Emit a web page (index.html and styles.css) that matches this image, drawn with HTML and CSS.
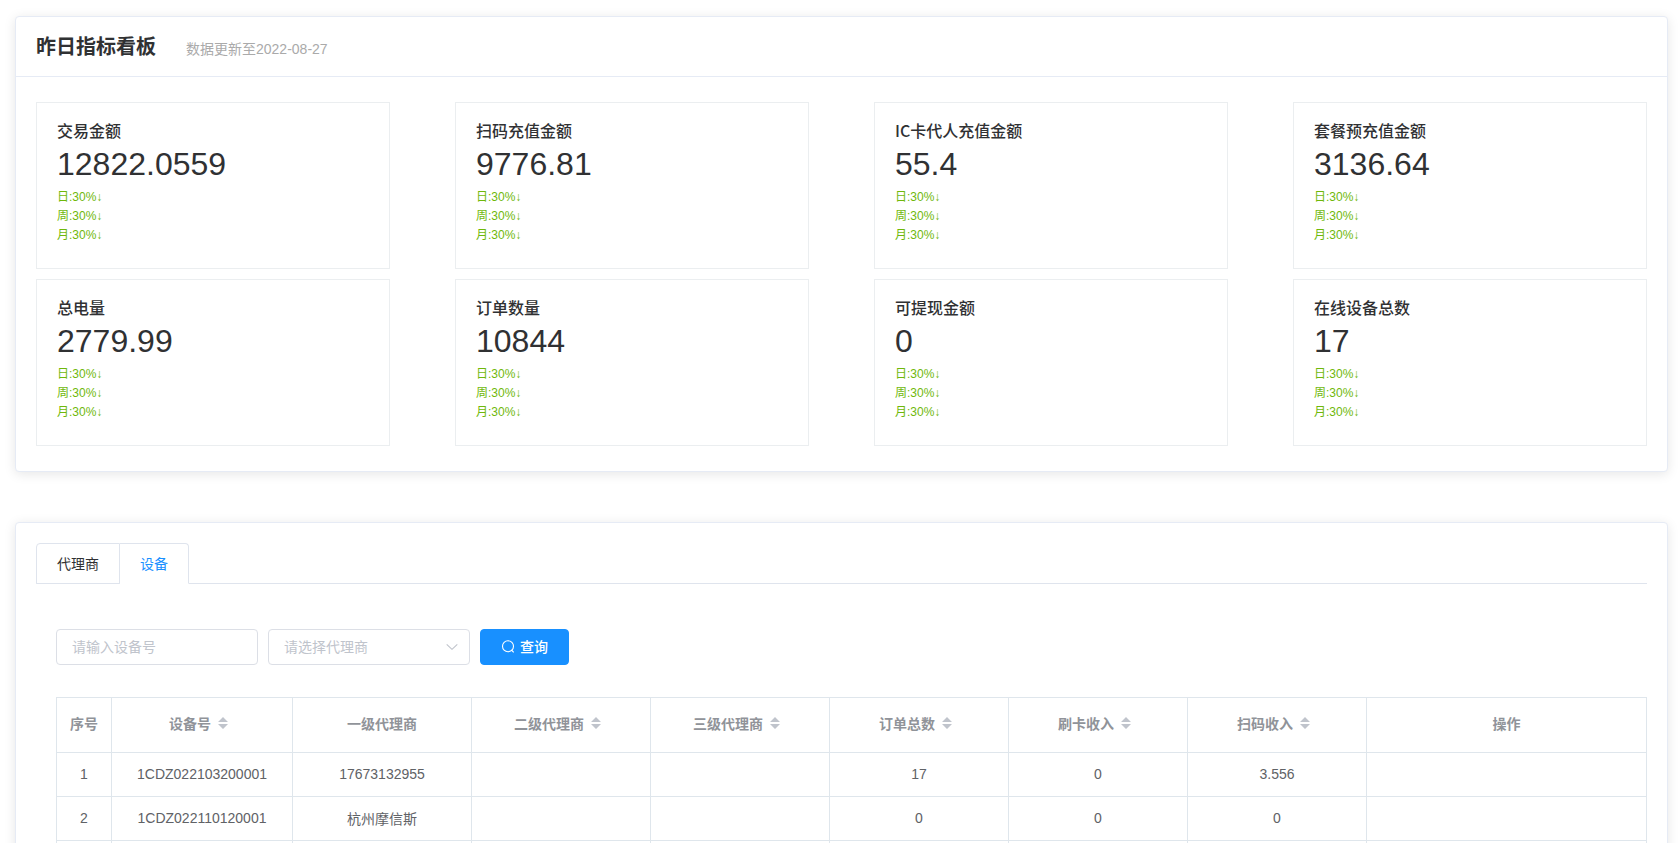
FILE: index.html
```html
<!DOCTYPE html>
<html lang="zh-CN">
<head>
<meta charset="utf-8">
<title>昨日指标看板</title>
<link rel="stylesheet" href="styles.css">
</head>
<body>
<main class="dashboard">
  <section class="panel">
    <header class="panel-header">
      <h1 class="panel-title">昨日指标看板</h1>
      <span class="panel-note">数据更新至2022-08-27</span>
    </header>
    <div class="metrics">
      <article class="metric"><h2 class="metric-name">交易金额</h2><p class="metric-value">12822.0559</p><ul class="trends"><li>日:30%↓</li><li>周:30%↓</li><li>月:30%↓</li></ul></article>
      <article class="metric"><h2 class="metric-name">扫码充值金额</h2><p class="metric-value">9776.81</p><ul class="trends"><li>日:30%↓</li><li>周:30%↓</li><li>月:30%↓</li></ul></article>
      <article class="metric"><h2 class="metric-name">IC卡代人充值金额</h2><p class="metric-value">55.4</p><ul class="trends"><li>日:30%↓</li><li>周:30%↓</li><li>月:30%↓</li></ul></article>
      <article class="metric"><h2 class="metric-name">套餐预充值金额</h2><p class="metric-value">3136.64</p><ul class="trends"><li>日:30%↓</li><li>周:30%↓</li><li>月:30%↓</li></ul></article>
      <article class="metric"><h2 class="metric-name">总电量</h2><p class="metric-value">2779.99</p><ul class="trends"><li>日:30%↓</li><li>周:30%↓</li><li>月:30%↓</li></ul></article>
      <article class="metric"><h2 class="metric-name">订单数量</h2><p class="metric-value">10844</p><ul class="trends"><li>日:30%↓</li><li>周:30%↓</li><li>月:30%↓</li></ul></article>
      <article class="metric"><h2 class="metric-name">可提现金额</h2><p class="metric-value">0</p><ul class="trends"><li>日:30%↓</li><li>周:30%↓</li><li>月:30%↓</li></ul></article>
      <article class="metric"><h2 class="metric-name">在线设备总数</h2><p class="metric-value">17</p><ul class="trends"><li>日:30%↓</li><li>周:30%↓</li><li>月:30%↓</li></ul></article>
    </div>
  </section>

  <section class="panel panel-list">
    <div class="tabs" role="tablist">
      <button class="tab" type="button" role="tab" aria-selected="false">代理商</button>
      <button class="tab tab-active" type="button" role="tab" aria-selected="true">设备</button>
    </div>
    <div class="tab-body">
      <form class="filters">
        <input class="field" type="text" placeholder="请输入设备号" aria-label="请输入设备号">
        <div class="select-wrap">
          <select class="field select" aria-label="请选择代理商">
            <option>请选择代理商</option>
          </select>
          <svg class="chevron" viewBox="0 0 12 6" width="12" height="6" aria-hidden="true"><path d="M.7.4 6 5.3 11.3.4" fill="none" stroke="#c0c4cc" stroke-width="1.1"/></svg>
        </div>
        <button class="search" type="button">
          <svg viewBox="0 0 14 14" width="14" height="14" aria-hidden="true"><circle cx="7" cy="7.2" r="5.5" fill="none" stroke="#fff" stroke-width="1.1"/><path d="M10.4 11l2.3 2.3" fill="none" stroke="#fff" stroke-width="1.1"/></svg>
          <span>查询</span>
        </button>
      </form>
      <table class="grid">
        <colgroup>
          <col class="col-index"><col class="col-device"><col><col><col><col><col><col><col class="col-action">
        </colgroup>
        <thead>
          <tr>
            <th>序号</th>
            <th><button class="sort" type="button">设备号<svg viewBox="0 0 24 14" width="24" height="14" aria-hidden="true"><path d="M7 6l5-5 5 5zM7 8h10l-5 5z"/></svg></button></th>
            <th>一级代理商</th>
            <th><button class="sort" type="button">二级代理商<svg viewBox="0 0 24 14" width="24" height="14" aria-hidden="true"><path d="M7 6l5-5 5 5zM7 8h10l-5 5z"/></svg></button></th>
            <th><button class="sort" type="button">三级代理商<svg viewBox="0 0 24 14" width="24" height="14" aria-hidden="true"><path d="M7 6l5-5 5 5zM7 8h10l-5 5z"/></svg></button></th>
            <th><button class="sort" type="button">订单总数<svg viewBox="0 0 24 14" width="24" height="14" aria-hidden="true"><path d="M7 6l5-5 5 5zM7 8h10l-5 5z"/></svg></button></th>
            <th><button class="sort" type="button">刷卡收入<svg viewBox="0 0 24 14" width="24" height="14" aria-hidden="true"><path d="M7 6l5-5 5 5zM7 8h10l-5 5z"/></svg></button></th>
            <th><button class="sort" type="button">扫码收入<svg viewBox="0 0 24 14" width="24" height="14" aria-hidden="true"><path d="M7 6l5-5 5 5zM7 8h10l-5 5z"/></svg></button></th>
            <th>操作</th>
          </tr>
        </thead>
        <tbody>
          <tr><td>1</td><td>1CDZ022103200001</td><td>17673132955</td><td></td><td></td><td>17</td><td>0</td><td>3.556</td><td></td></tr>
          <tr><td>2</td><td>1CDZ022110120001</td><td>杭州摩信斯</td><td></td><td></td><td>0</td><td>0</td><td>0</td><td></td></tr>
          <tr><td></td><td></td><td></td><td></td><td></td><td></td><td></td><td></td><td></td></tr>
        </tbody>
      </table>
    </div>
  </section>
</main>
</body>
</html>
```
FILE: styles.css
```css
* {
  box-sizing: border-box;
}

body {
  margin: 0;
  background: #fff;
  color: #303133;
  font-family: "Liberation Sans", "Noto Sans CJK SC", sans-serif;
  font-size: 14px;
}

button,
input,
select {
  font: inherit;
}

.dashboard {
  display: flex;
  flex-direction: column;
  gap: 50px;
  padding: 16px 12px 16px 15px;
}

.panel {
  border: 1px solid #e6ebf5;
  border-radius: 4px;
  background: #fff;
  box-shadow: 0 2px 12px rgba(0, 0, 0, 0.1);
}

.panel-header {
  display: flex;
  align-items: baseline;
  gap: 30px;
  padding: 15px 20px 14px;
  border-bottom: 1px solid #e6ebf5;
}

.panel-title {
  margin: 0;
  font-size: 20px;
  font-weight: 700;
  line-height: 30px;
}

.panel-note {
  color: #aaa;
}

.metrics {
  display: grid;
  grid-template-columns: repeat(4, 1fr);
  gap: 10px 65px;
  padding: 25px 20px;
}

.metric {
  padding: 19px 20px 23px;
  border: 1px solid #ebeef0;
}

.metric-name {
  margin: 0 0 2px;
  font-family: "Noto Sans CJK SC", sans-serif;
  font-size: 16px;
  font-weight: 500;
  line-height: 16px;
}

.metric-value {
  margin: 0;
  font-size: 32px;
  line-height: 48px;
}

.trends {
  margin: 0;
  padding: 0;
  list-style: none;
  color: #6fb80b;
  font-size: 12px;
  line-height: 19px;
}

.panel-list {
  padding: 20px;
}

.tabs {
  display: flex;
  border-bottom: 1px solid #dfe4ed;
}

.tab {
  height: 41px;
  margin: 0 0 -1px;
  padding: 0 20px 2px;
  border: 1px solid #dfe4ed;
  border-radius: 4px 0 0 0;
  background: #fff;
  color: #303133;
}

.tab-active {
  border-bottom-color: #fff;
  border-left: 0;
  border-radius: 0 4px 0 0;
  color: #1890ff;
}

.tab-body {
  padding: 45px 0 0 20px;
}

.filters {
  display: flex;
  gap: 10px;
  margin-bottom: 32px;
}

.field {
  width: 202px;
  height: 36px;
  padding: 0 15px;
  border: 1px solid #dcdfe6;
  border-radius: 4px;
  background: #fff;
  color: #c0c4cc;
}

.field::placeholder {
  color: #c0c4cc;
}

.select-wrap {
  position: relative;
}

.select {
  appearance: none;
}

.chevron {
  position: absolute;
  top: 15px;
  right: 12px;
  pointer-events: none;
}

.search {
  display: flex;
  align-items: center;
  gap: 5px;
  height: 36px;
  padding: 0 20px 2px;
  border: 1px solid #1890ff;
  border-radius: 4px;
  background: #1890ff;
  color: #fff;
  font-weight: 500;
}

.grid {
  width: 100%;
  border-collapse: collapse;
  table-layout: fixed;
  text-align: center;
}

.col-index {
  width: 55px;
}

.col-device {
  width: 181px;
}

.col-action {
  width: 280px;
}

.grid th,
.grid td {
  height: 44px;
  padding: 0 0 2px;
  border: 1px solid #dfe6ec;
  color: #606266;
}

.grid th {
  height: 55px;
  padding-bottom: 4px;
  color: #909399;
  font-weight: 700;
}

.sort {
  display: inline-flex;
  align-items: center;
  padding: 0;
  border: 0;
  background: none;
  color: inherit;
}

.sort svg {
  fill: #c0c4cc;
}
```
